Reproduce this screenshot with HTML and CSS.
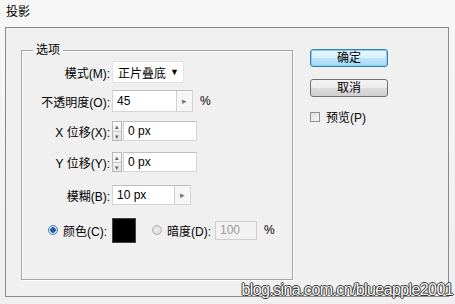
FILE: index.html
```html
<!DOCTYPE html>
<html lang="zh-CN">
<head>
    <meta charset="UTF-8">
    <title>投影</title>
    <link rel="stylesheet" href="styles.css">
</head>
<body>
    <div class="titlebar">投影</div>

    <div class="panel">
        <fieldset class="group">
            <legend>选项</legend>

            <div class="row r1">
                <span class="lbl">模式(M):</span>
                <div class="select">正片叠底<span class="caret">▼</span></div>
            </div>

            <div class="row r2">
                <span class="lbl">不透明度(O):</span>
                <div class="field wide">
                    <span class="val">45</span>
                    <span class="pop">▸</span>
                </div>
                <span class="unit">%</span>
            </div>

            <div class="row r3">
                <span class="lbl">X 位移(X):</span>
                <div class="spin"><span>▴</span><span>▾</span></div>
                <div class="field offset"><span class="val">0 px</span></div>
            </div>

            <div class="row r4">
                <span class="lbl">Y 位移(Y):</span>
                <div class="spin"><span>▴</span><span>▾</span></div>
                <div class="field offset"><span class="val">0 px</span></div>
            </div>

            <div class="row r5">
                <span class="lbl">模糊(B):</span>
                <div class="field blur">
                    <span class="val">10 px</span>
                    <span class="pop">▸</span>
                </div>
            </div>

            <div class="row r6">
                <span class="lbl"><span class="radio on"></span>颜色(C):</span>
                <div class="swatch"></div>
                <span class="opt"><span class="radio"></span>暗度(D):</span>
                <div class="field dim"><span class="val">100</span></div>
                <span class="unit">%</span>
            </div>
        </fieldset>

        <div class="side">
            <button class="btn default">确定</button>
            <button class="btn">取消</button>
            <label class="check"><span class="box"></span>预览(P)</label>
        </div>
    </div>

    <div class="mark">blog.sina.com.cn/blueapple2001</div>
</body>
</html>
```

FILE: styles.css
```css
* {
    margin: 0;
    padding: 0;
    box-sizing: border-box;
}

body {
    width: 455px;
    height: 304px;
    overflow: hidden;
    position: relative;
    background: linear-gradient(180deg, #f7f7f7, #efefef);
    font-family: "Liberation Sans", "Noto Sans CJK SC", sans-serif;
    font-size: 12px;
    color: #000;
}

.titlebar {
    height: 27px;
    padding: 5px 0 0 6px;
    line-height: 15px;
}

.panel {
    display: flex;
    align-items: flex-start;
    gap: 17px;
    width: 444px;
    height: 270px;
    margin-left: 5px;
    padding: 14px 0 0 15px;
    border: 1px solid #8a8a8a;
    background: #f0f0f0;
}

/* group box */
.group {
    width: 272px;
    border: 1px solid #a5a5a5;
    box-shadow: 1px 1px 0 #fff, inset 1px 1px 0 #fff;
    padding: 0 0 31px 0;
}

.group legend {
    margin-left: 11px;
    padding: 0 3px;
    line-height: 16px;
}

.row {
    display: flex;
    align-items: center;
}
.r1 { height: 28px; }
.r2 { height: 30px; }
.r3 { height: 30px; }
.r4 { height: 32px; }
.r5 { height: 34px; }
.r6 { height: 36px; }

.lbl {
    width: 88px;
    margin-right: 2px;
    text-align: right;
    display: flex;
    justify-content: flex-end;
    align-items: center;
}

.r6 .lbl {
    width: 85px;
    margin-right: 5px;
}

.select {
    width: 72px;
    height: 22px;
    display: flex;
    align-items: center;
    justify-content: space-between;
    padding: 0 4px 0 5px;
    background: #fff;
    border: 1px solid #e2e2e2;
}
.caret {
    font-size: 9px;
}

.field {
    height: 20px;
    display: flex;
    align-items: center;
    background: #fff;
    border: 1px solid #d4d4d4;
    border-top-color: #bdbdbd;
}
.field .val {
    flex: 1;
    padding-left: 4px;
}
.field .pop {
    width: 16px;
    height: 100%;
    border-left: 1px solid #d0d0d0;
    background: #f6f6f6;
    color: #777;
    font-size: 9px;
    display: flex;
    align-items: center;
    justify-content: center;
}

.wide {
    width: 81px;
    height: 22px;
}
.blur {
    width: 79px;
}
.offset {
    width: 74px;
    margin-left: 1px;
}

.spin {
    width: 10px;
    height: 20px;
    display: flex;
    flex-direction: column;
    border: 1px solid #b7b7b7;
    background: linear-gradient(#fbfbfb, #e6e6e6);
}
.spin span {
    flex: 1;
    font-size: 7px;
    line-height: 9px;
    text-align: center;
    color: #666;
}
.spin span + span {
    border-top: 1px solid #c8c8c8;
}

.unit {
    margin-left: 7px;
}

.swatch {
    width: 24px;
    height: 25px;
    background: #000;
    border: 1px solid #444;
}

.opt {
    display: flex;
    align-items: center;
    margin-left: 16px;
    margin-right: 4px;
}

.radio {
    width: 10px;
    height: 10px;
    margin-right: 5px;
    border-radius: 50%;
    border: 1px solid #b0b0b0;
    background: radial-gradient(#eee, #d6d6d6);
}
.radio.on {
    border-color: #4d7fae;
    background: radial-gradient(circle, #1f5e9c 0 2.5px, #d6e6f4 3px);
}

.dim {
    width: 42px;
    height: 19px;
    background: #f2f2f2;
    border-color: #cfcfcf;
    color: #999;
}

/* buttons column */
.side {
    width: 78px;
    margin-top: 7px;
    display: flex;
    flex-direction: column;
}

.btn {
    height: 18px;
    font: inherit;
    border: 1px solid #707070;
    border-radius: 3px;
    background: linear-gradient(#f4f4f4 0%, #ebebeb 50%, #dcdcdc 51%, #cfcfcf 100%);
    margin-bottom: 12px;
    line-height: 14px;
}
.btn.default {
    border-color: #3c7fb1;
    background: linear-gradient(#eaf6fd 0%, #d9f0fc 50%, #bee6fd 51%, #a7d9f5 100%);
    box-shadow: inset 0 0 0 1px #7ed1f3;
}

.check {
    display: flex;
    align-items: center;
    margin-top: -1px;
}
.check .box {
    width: 10px;
    height: 10px;
    margin-right: 6px;
    border: 1px solid #8e8f8f;
    background: linear-gradient(135deg, #dcdcdc, #fafafa);
}

/* watermark over the corner */
.mark {
    position: absolute;
    right: 2px;
    bottom: 5px;
    font-size: 16px;
    letter-spacing: -0.6px;
    color: #fbfbfb;
    text-shadow: 1px 0 #333, -1px 0 #333, 0 1px #333, 0 -1px #333;
}
```
